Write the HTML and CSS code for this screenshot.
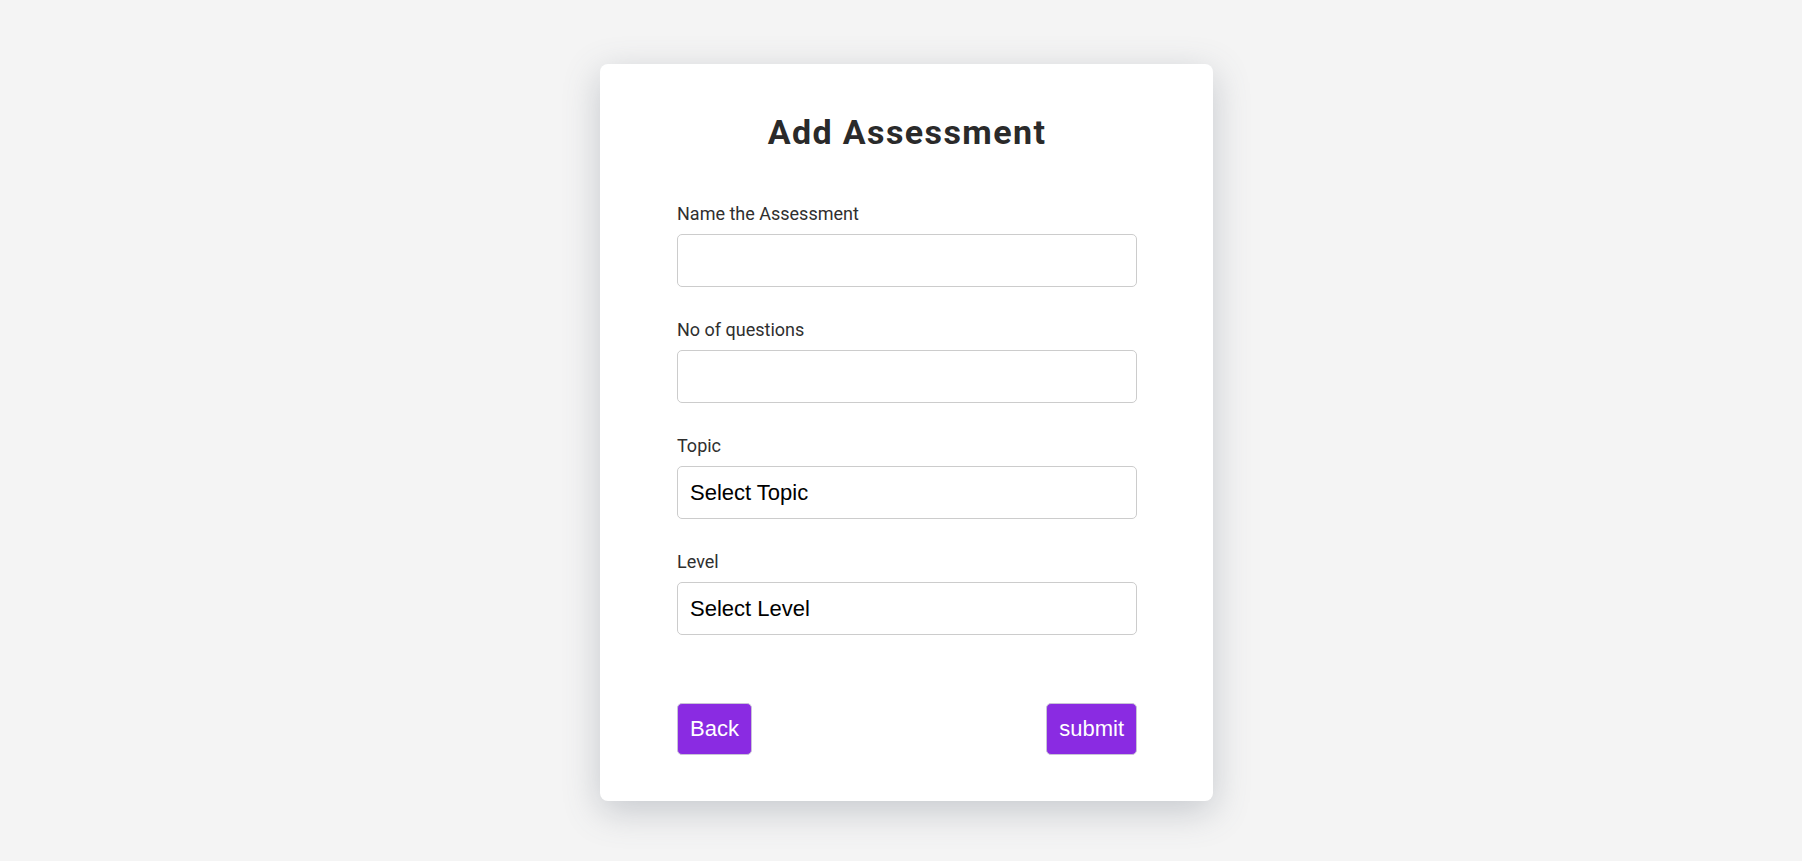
FILE: index.html
```html
<!DOCTYPE html>
<html lang="en">
<head>
<meta charset="utf-8">
<title>Add Assessment</title>
<link rel="stylesheet" href="styles.css">
</head>
<body>
<main class="page">
  <form class="card">
    <h1 class="title">Add Assessment</h1>
    <div class="fields">
      <div class="field">
        <label class="label" for="name">Name the Assessment</label>
        <input class="control" id="name" type="text">
      </div>
      <div class="field">
        <label class="label" for="count">No of questions</label>
        <input class="control" id="count" type="text">
      </div>
      <div class="field">
        <label class="label" for="topic">Topic</label>
        <select class="control select" id="topic">
          <option>Select Topic</option>
        </select>
      </div>
      <div class="field">
        <label class="label" for="level">Level</label>
        <select class="control select" id="level">
          <option>Select Level</option>
        </select>
      </div>
    </div>
    <div class="actions">
      <button class="btn" type="button">Back</button>
      <button class="btn" type="button">submit</button>
    </div>
  </form>
</main>
</body>
</html>
```

FILE: styles.css
```css
html, body {
  margin: 0;
  padding: 0;
  background: #f4f4f4;
}

body {
  font-family: Roboto, "Liberation Sans", sans-serif;
}

.page {
  display: flex;
  justify-content: center;
  padding: 64px 0 0 11px;
  min-height: 861px;
  box-sizing: border-box;
}

.card {
  width: 613px;
  height: 737px;
  box-sizing: border-box;
  background: #ffffff;
  border-radius: 8px;
  box-shadow: 0 10px 36px rgba(90, 100, 115, 0.3);
  padding: 48px 76px 46px 77px;
  display: flex;
  flex-direction: column;
}

.title {
  margin: 0;
  font-family: Roboto, sans-serif;
  font-weight: 700;
  font-size: 34px;
  line-height: 40px;
  letter-spacing: 1.4px;
  color: #2a2a2a;
  text-align: center;
}

.fields {
  margin-top: 51px;
  display: flex;
  flex-direction: column;
  gap: 32px;
}

.field {
  display: flex;
  flex-direction: column;
  gap: 9px;
}

.label {
  font-family: Roboto, sans-serif;
  font-size: 18px;
  line-height: 22px;
  color: #2f2f2f;
}

.control {
  display: block;
  width: 100%;
  height: 53px;
  box-sizing: border-box;
  margin: 0;
  border: 1px solid #cccccc;
  border-radius: 5px;
  background: #ffffff;
  padding: 0 12px;
  font-family: "Liberation Sans", Arial, sans-serif;
  font-size: 22px;
  color: #000000;
  outline: none;
}

.select {
  -webkit-appearance: none;
  appearance: none;
}

.actions {
  margin-top: 68px;
  display: flex;
  justify-content: space-between;
  align-items: center;
}

.btn {
  margin: 0;
  height: 52px;
  box-sizing: border-box;
  padding: 0 12px;
  border: 1px solid #c9c3d6;
  border-radius: 5px;
  background: #8a2be2;
  color: #ffffff;
  font-family: "Liberation Sans", Arial, sans-serif;
  font-size: 22px;
  line-height: 1;
  cursor: pointer;
}
```
